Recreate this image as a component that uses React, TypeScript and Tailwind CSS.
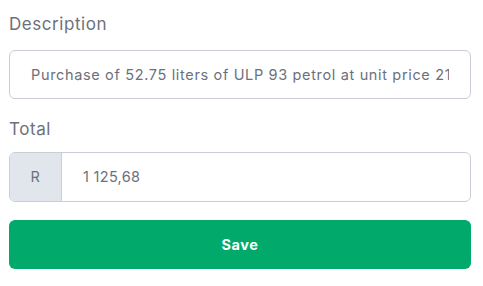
export default function App() {
  return (
    <div className="h-[286px] w-[483px] bg-white pl-[9px] pr-[12px] pt-[13px] font-['Inter',sans-serif] tracking-[0.035em]">
      <label className="block text-[17px] leading-[22px] text-[#6b717c]">Description</label>
      <input
        readOnly
        value="Purchase of 52.75 liters of ULP 93 petrol at unit price 21.34"
        className="mt-[15px] block h-[49px] w-full rounded-[6px] border border-[#c9cdd5] px-[21px] text-[14.5px] tracking-[0.045em] text-[#6b717c] outline-none"
      />
      <label className="mt-[19px] block text-[17px] leading-[22px] text-[#6b717c]">Total</label>
      <div className="mt-[12px] flex h-[50px] overflow-hidden rounded-[6px] border border-[#c9cdd5]">
        <div className="flex w-[52px] items-center justify-center border-r border-[#c9cdd5] bg-[#e1e5ec] text-[14.5px] text-[#6b717c]">
          R
        </div>
        <input
          readOnly
          value="1 125,68"
          className="min-w-0 flex-1 pl-[21px] text-[14.5px] tracking-[0.02em] text-[#6b717c] outline-none"
        />
      </div>
      <button className="mt-[18px] flex h-[49px] w-full items-center justify-center rounded-[6px] bg-[#01aa6a] text-[14.5px] font-bold text-white">
        Save
      </button>
    </div>
  )
}
